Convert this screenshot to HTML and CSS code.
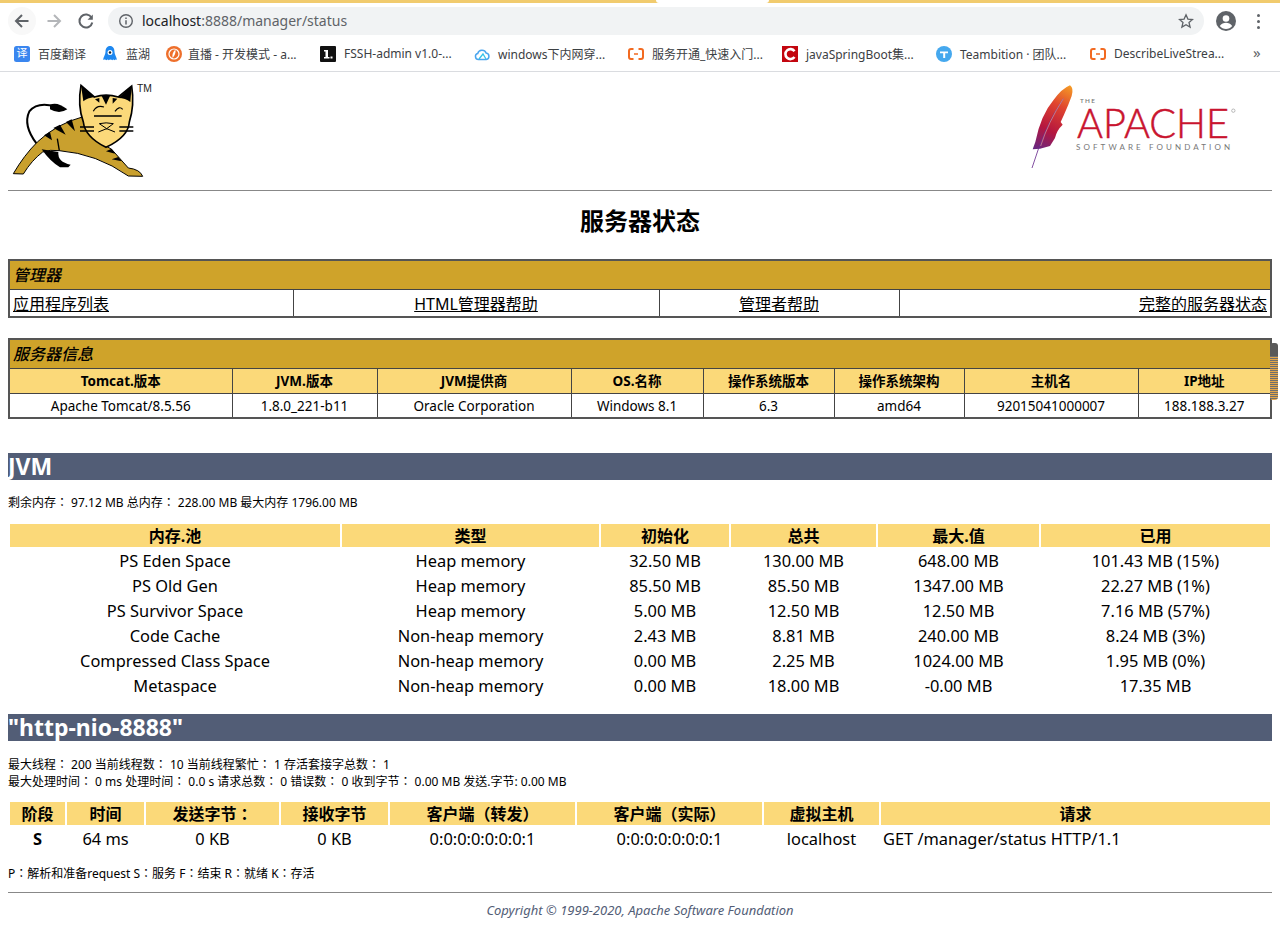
FILE: index.html
```html
<!DOCTYPE html>
<html lang="zh">
<head>
<meta charset="utf-8">
<title>/manager</title>
<link rel="stylesheet" href="styles.css">
</head>
<body>
<header class="browser">
  <div class="tabstrip"><div class="tabgap"></div></div>
  <div class="toolbar">
    <span class="navbtn hover"><svg width="18" height="18" viewBox="0 0 18 18"><path d="M15.5 9H3.5M9 3L3 9l6 6" fill="none" stroke="#5f6368" stroke-width="2"/></svg></span>
    <span class="navbtn"><svg width="18" height="18" viewBox="0 0 18 18"><path d="M2.500 9H14.500M9 3l6 6-6 6" fill="none" stroke="#b4b6b9" stroke-width="2"/></svg></span>
    <span class="navbtn"><svg width="18" height="18" viewBox="0 0 18 18"><path d="M14.600 5.800A6.500 6.500 0 1 0 15.300 10.500" fill="none" stroke="#5f6368" stroke-width="2"/><path d="M15.800 2.500V7.800H10.500Z" fill="#5f6368"/></svg></span>
    <div class="omnibox">
      <svg class="info" width="16" height="16" viewBox="0 0 16 16"><circle cx="8" cy="8" r="6.300" fill="none" stroke="#5f6368" stroke-width="1.400"/><path d="M8 7.200v4.300M8 4.500v1.500" stroke="#5f6368" stroke-width="1.500"/></svg>
      <span class="url"><span class="host">localhost</span>:8888/manager/status</span>
      <svg class="star" width="16" height="16" viewBox="0 0 16 16"><path d="M8 1.800l1.900 4.300 4.600.4-3.500 3 1.100 4.600L8 11.700l-4.100 2.400L5 9.500l-3.500-3 4.600-.4z" fill="none" stroke="#5f6368" stroke-width="1.300"/></svg>
    </div>
    <svg class="avatar" width="20" height="20" viewBox="0 0 20 20"><circle cx="10" cy="10" r="10" fill="#5f6368"/><circle cx="10" cy="7.500" r="3.300" fill="#fff"/><path d="M3.800 15c1.500-2.500 4-3.300 6.200-3.300s4.700.8 6.200 3.300c-1.500 1.900-3.700 3-6.200 3s-4.700-1.100-6.200-3z" fill="#fff"/></svg>
    <span class="dots"><i></i><i></i><i></i></span>
  </div>
  <nav class="bookmarks">
    <a class="bm bm-a"><svg width="16" height="16" viewBox="0 0 16 16"><rect width="16" height="16" rx="2.500" fill="#3a86ef"/></svg><span class="ficon">译</span><span>百度翻译</span></a>
    <a class="bm bm-b"><svg width="14" height="16" viewBox="0 0 14 16"><path d="M7 0c3 0 4.500 2.500 4.500 6 0 2 2 5 2.500 8-1.200-.6-1.700-.6-2.500.2-.8-.8-1.500-.8-2.200 0-.8-.8-2.800-.8-3.600 0-.7-.8-1.400-.8-2.200 0C2.700 13.400 1.200 13.400 0 14c.5-3 2.500-6 2.500-8C2.500 2.500 4 0 7 0z" fill="#1e88f0"/><circle cx="7" cy="6.500" r="2.500" fill="#fff"/><circle cx="7" cy="6.500" r="1.200" fill="#123"/></svg><span>蓝湖</span></a>
    <a class="bm bm-c"><svg width="16" height="16" viewBox="0 0 16 16"><circle cx="8" cy="8" r="8" fill="#ee6f2b"/><circle cx="8" cy="8" r="5" fill="none" stroke="#fff" stroke-width="1.200"/><path d="M9.500 3.500C7 6 6 8 6.500 12 8.500 10 10 7 9.500 3.500z" fill="#fff"/></svg><span>直播 - 开发模式 - a...</span></a>
    <a class="bm"><svg width="16" height="16" viewBox="0 0 16 16"><rect width="16" height="16" rx="1" fill="#111"/><path d="M4 4h4v7h1.500v1.500H4V11h1.500V5.500H4zM10.500 10.500H12.500V12.500H10.500z" fill="#fff"/></svg><span>FSSH-admin v1.0-...</span></a>
    <a class="bm"><svg width="16" height="16" viewBox="0 0 16 16"><path d="M4.500 13.500a3 3 0 0 1-.8-5.900 4.400 4.400 0 0 1 8.400-.6 3.300 3.300 0 0 1 .2 6.500z" fill="none" stroke="#4aa5ee" stroke-width="1.500"/><path d="M5 13l4-5 3 5" fill="none" stroke="#35c4e8" stroke-width="1.300"/></svg><span>windows下内网穿...</span></a>
    <a class="bm"><svg width="16" height="16" viewBox="0 0 16 16"><path d="M5.500 3H3a2 2 0 0 0-2 2v6a2 2 0 0 0 2 2h2.500M10.500 3H13a2 2 0 0 1 2 2v6a2 2 0 0 1-2 2h-2.500" fill="none" stroke="#f26a21" stroke-width="2"/><path d="M6 8h4" stroke="#f26a21" stroke-width="1.500"/></svg><span>服务开通_快速入门...</span></a>
    <a class="bm"><svg width="16" height="16" viewBox="0 0 16 16"><rect width="16" height="16" fill="#c3060f"/><path d="M12.500 5.200A5 5 0 1 0 12.500 11" fill="none" stroke="#fff" stroke-width="2.600"/></svg><span>javaSpringBoot集...</span></a>
    <a class="bm"><svg width="16" height="16" viewBox="0 0 16 16"><circle cx="8" cy="8" r="8" fill="#45a8ee"/><path d="M4 5.500h8v1.800H9.200V12H7.200V7.300H4z" fill="#fff"/></svg><span>Teambition · 团队...</span></a>
    <a class="bm"><svg width="16" height="16" viewBox="0 0 16 16"><path d="M5.500 3H3a2 2 0 0 0-2 2v6a2 2 0 0 0 2 2h2.500M10.500 3H13a2 2 0 0 1 2 2v6a2 2 0 0 1-2 2h-2.500" fill="none" stroke="#f26a21" stroke-width="2"/><path d="M6 8h4" stroke="#f26a21" stroke-width="1.500"/></svg><span>DescribeLiveStrea...</span></a>
    <span class="more">»</span>
  </nav>
</header>

<main class="page">
  <div class="brand">
    <svg class="tomcat" width="150" height="102" viewBox="24 24 450 306" aria-label="Tomcat">
      <path d="M110 215Q68 160 88 118Q112 88 165 103" fill="none" stroke="#000" stroke-width="6"/>
      <path d="M150 98Q172 88 202 112Q178 128 150 112Z" fill="#000"/>
      <path d="M250 134Q170 155 112 210Q72 250 40 305L70 306Q95 265 128 240Q150 232 178 236Q290 245 385 312L428 313Q420 292 385 288L335 232Q300 215 262 180Z" fill="#c9a02e" stroke="#000" stroke-width="3"/>
      <path d="M125 232L175 240Q172 270 212 278L205 286H180Q150 268 125 232Z" fill="#000"/>
      <path d="M172 200L178 236" stroke="#000" stroke-width="4"/>
      <path d="M215 142L225 178L198 150ZM180 158L197 188L160 168ZM150 180L156 205L132 190ZM335 230L345 245L318 238ZM355 255L365 268L335 262Z" fill="#000"/>
      <path d="M243 40L283 75Q318 64 355 75L395 42Q404 100 388 150Q385 195 318 226Q255 195 250 150Q232 100 243 40Z" fill="#fbd97a" stroke="#000" stroke-width="5"/>
      <path d="M243 40L283 75Q262 78 250 88ZM395 42L355 78Q376 78 391 90Z" fill="#000"/>
      <path d="M305 72L318 98L330 72ZM338 78L338 95L352 80ZM298 78L298 92L285 82Z" fill="#000"/>
      <path d="M282 132H365M240 165H282M240 177H282M358 165H400M358 177H400" stroke="#000" stroke-width="4"/>
      <path d="M280 118Q290 98 312 105M345 118Q358 100 368 112" fill="none" stroke="#000" stroke-width="3.500"/>
      <path d="M298 155Q318 150 340 155L320 170ZM295 180L320 170L345 180M320 170V172" fill="none" stroke="#000" stroke-width="3"/>
      <text x="411" y="59" class="tm">TM</text>
    </svg>
    <svg class="apache" width="252" height="102" viewBox="0 24 756 306" aria-label="The Apache Software Foundation">
      <defs>
        <linearGradient id="feather" x1="150" y1="40" x2="40" y2="240" gradientUnits="userSpaceOnUse">
          <stop offset="0" stop-color="#f59c25"/>
          <stop offset=".3" stop-color="#e0452f"/>
          <stop offset=".65" stop-color="#b5163f"/>
          <stop offset="1" stop-color="#5c2a8c"/>
        </linearGradient>
      </defs>
      <path d="M150 40Q162 48 155 72Q145 100 132 128L122 150L128 158Q110 175 105 198L90 222L60 230L38 232L46 210Q62 130 100 85Q125 50 150 40Z" fill="url(#feather)"/>
      <path d="M36 288Q75 160 130 80" fill="none" stroke="#6a2d8f" stroke-width="2.500"/>
      <path d="M130 80Q85 150 62 222" fill="none" stroke="#f6c7a8" stroke-width="1.500"/>
      <text x="180" y="94" class="ap-the">THE</text>
      <text x="171" y="197" class="ap-name" textLength="456" lengthAdjust="spacingAndGlyphs">APACHE</text>
      <text x="168" y="234" class="ap-sub" textLength="462">SOFTWARE FOUNDATION</text>
      <circle cx="640" cy="116" r="5" fill="none" stroke="#999" stroke-width="2"/>
    </svg>
  </div>
  <hr class="rule">
  <h1 class="title">服务器状态</h1>

  <table class="grid links">
    <colgroup><col class="l1"><col class="l2"><col class="l3"><col class="l4"></colgroup>
    <tr><td colspan="4" class="section">管理器</td></tr>
    <tr class="linkrow">
      <td class="left"><a href="#">应用程序列表</a></td>
      <td class="center"><a href="#">HTML管理器帮助</a></td>
      <td class="center"><a href="#">管理者帮助</a></td>
      <td class="right"><a href="#">完整的服务器状态</a></td>
    </tr>
  </table>

  <table class="grid server">
    <colgroup><col class="s1"><col class="s2"><col class="s3"><col class="s4"><col class="s5"><col class="s6"><col class="s7"><col class="s8"></colgroup>
    <tr><td colspan="8" class="section">服务器信息</td></tr>
    <tr class="heads"><th>Tomcat.版本</th><th>JVM.版本</th><th>JVM提供商</th><th>OS.名称</th><th>操作系统版本</th><th>操作系统架构</th><th>主机名</th><th>IP地址</th></tr>
    <tr class="vals"><td>Apache Tomcat/8.5.56</td><td>1.8.0_221-b11</td><td>Oracle Corporation</td><td>Windows 8.1</td><td>6.3</td><td>amd64</td><td>92015041000007</td><td>188.188.3.27</td></tr>
  </table>

  <h2 class="bar bar-jvm">JVM</h2>
  <p class="note note-mem" lang="zh-Hant">剩余内存： 97.12 MB 总内存： 228.00 MB 最大内存 1796.00 MB</p>
  <table class="plain mem">
    <colgroup><col class="m1"><col class="m2"><col class="m3"><col class="m4"><col class="m5"><col class="m6"></colgroup>
    <tr><th>内存.池</th><th>类型</th><th>初始化</th><th>总共</th><th>最大.值</th><th>已用</th></tr>
    <tr><td>PS Eden Space</td><td>Heap memory</td><td>32.50 MB</td><td>130.00 MB</td><td>648.00 MB</td><td>101.43 MB (15%)</td></tr>
    <tr><td>PS Old Gen</td><td>Heap memory</td><td>85.50 MB</td><td>85.50 MB</td><td>1347.00 MB</td><td>22.27 MB (1%)</td></tr>
    <tr><td>PS Survivor Space</td><td>Heap memory</td><td>5.00 MB</td><td>12.50 MB</td><td>12.50 MB</td><td>7.16 MB (57%)</td></tr>
    <tr><td>Code Cache</td><td>Non-heap memory</td><td>2.43 MB</td><td>8.81 MB</td><td>240.00 MB</td><td>8.24 MB (3%)</td></tr>
    <tr><td>Compressed Class Space</td><td>Non-heap memory</td><td>0.00 MB</td><td>2.25 MB</td><td>1024.00 MB</td><td>1.95 MB (0%)</td></tr>
    <tr><td>Metaspace</td><td>Non-heap memory</td><td>0.00 MB</td><td>18.00 MB</td><td>-0.00 MB</td><td>17.35 MB</td></tr>
  </table>

  <h2 class="bar bar-http">"http-nio-8888"</h2>
  <p class="note note-thread" lang="zh-Hant">最大线程： 200 当前线程数： 10 当前线程繁忙： 1 存活套接字总数： 1<br>最大处理时间： 0 ms 处理时间： 0.0 s 请求总数： 0 错误数： 0 收到字节： 0.00 MB 发送.字节: 0.00 MB</p>
  <table class="plain req" lang="zh-Hant">
    <colgroup><col class="r1"><col class="r2"><col class="r3"><col class="r4"><col class="r5"><col class="r6"><col class="r7"><col class="r8"></colgroup>
    <tr><th>阶段</th><th>时间</th><th>发送字节：</th><th>接收字节</th><th>客户端（转发）</th><th>客户端（实际）</th><th>虚拟主机</th><th>请求</th></tr>
    <tr><td class="stage">S</td><td>64 ms</td><td>0 KB</td><td>0 KB</td><td>0:0:0:0:0:0:0:1</td><td>0:0:0:0:0:0:0:1</td><td>localhost</td><td class="left">GET /manager/status HTTP/1.1</td></tr>
  </table>
  <p class="note note-legend" lang="zh-Hant">P：解析和准备request S：服务 F：结束 R：就绪 K：存活</p>
  <hr class="rule rule-foot">
  <p class="copyright">Copyright © 1999-2020, Apache Software Foundation</p>
</main>
<div class="thumb"></div>
</body>
</html>
```
FILE: styles.css
```css
* { box-sizing: border-box; }
html, body { margin: 0; height: 931px; overflow: hidden; background: #fff; }
body { font-family: "Noto Sans", "Noto Sans CJK SC", sans-serif; color: #000; position: relative; }

.browser { height: 72px; border-bottom: 1px solid #dadce0; background: #fff; }
.tabstrip { height: 3px; background: #f1cb6e; padding-left: 656px; }
.tabgap { width: 113px; height: 3px; background: #fff; border-radius: 0 0 4px 4px; }
.toolbar { height: 32px; padding: 4px 0 0 8px; display: flex; align-items: center; }
.navbtn { width: 28px; height: 28px; border-radius: 50%; display: flex; align-items: center; justify-content: center; margin-right: 4px; flex: none; }
.navbtn.hover { background: #f8f8f8; }
.omnibox { flex: none; width: 1096px; height: 28px; margin-left: 4px; border-radius: 14px; background: #f1f3f4; display: flex; align-items: center; padding: 0 10px; font: 14px/18px "Noto Sans", sans-serif; color: #5f6368; }
.omnibox .info { margin-right: 8px; }
.url { flex: 1; margin-top: -1px; }
.host { color: #202124; }
.avatar { margin-left: 12px; flex: none; }
.dots { margin-left: 21px; display: flex; flex-direction: column; gap: 3px; }
.dots i { width: 3px; height: 3px; border-radius: 50%; background: #5f6368; display: block; }

.bookmarks { height: 36px; padding: 1px 0 0 14px; display: flex; align-items: center; font: 12px "Noto Sans", "Noto Sans CJK SC", sans-serif; color: #3c4043; position: relative; }
.bm { width: 154px; flex: none; display: flex; align-items: center; gap: 8px; position: relative; white-space: nowrap; }
.bm-a { width: 89px; }
.bm-b { width: 63px; gap: 9px; }
.bm-c { width: 154px; gap: 6px; }
.ficon { position: absolute; left: 2px; top: 1px; width: 12px; color: #fff; font-size: 11px; line-height: 14px; text-align: center; }
.more { position: absolute; left: 1253px; top: 7px; font-size: 15px; color: #5f6368; }

.page { padding: 8px 8px 0; }
.brand { height: 102px; display: flex; justify-content: space-between; }
.tm { font: 31px "Liberation Sans", sans-serif; fill: #222; }
.ap-the { font: 600 19px "Lato", sans-serif; letter-spacing: 4px; fill: #777; }
.ap-name { font: 300 122px "Lato", sans-serif; fill: #c9142f; stroke: #c9142f; stroke-width: 1.500px; }
.ap-sub { font: 400 24px "Lato", sans-serif; fill: #777; }

.rule { height: 1px; margin: 8px 0 0; border: 0; background: #888; }
.title { margin: 17px 0 0; height: 26px; line-height: 26px; text-align: center; font-size: 24px; font-weight: 700; }

table { table-layout: fixed; width: 1264px; }
.grid { border-collapse: collapse; border: 2px solid #555; font-size: 14px; }
.grid td, .grid th { border: 1px solid #444; padding: 0 3px; }
.links { margin-top: 25px; font-size: 16px; }
.server { margin-top: 20px; }
.section { height: 29px; background: #cfa32a; font-style: italic; font-weight: 500; font-size: 16px; text-align: left; padding: 0 3px 2px !important; color: #000; }
.linkrow { height: 28px; }
.linkrow a { color: #000; text-decoration: underline; }
.left { text-align: left; }
.center { text-align: center; }
.right { text-align: right; }
.l1 { width: 284px; } .l2 { width: 366px; } .l3 { width: 240px; } .l4 { width: 372px; }
.s1 { width: 223px; } .s2 { width: 145px; } .s3 { width: 194px; } .s4 { width: 132px; } .s5 { width: 131px; } .s6 { width: 130px; } .s7 { width: 174px; } .s8 { width: 133px; }
.heads { height: 25px; }
.heads th { background: #fbd979; font-size: 13.5px; font-weight: 700; padding-bottom: 1px; }
.vals { height: 25px; text-align: center; font-size: 13.5px; }
.vals td { padding-top: 1px; }

.bar { height: 27px; margin: 0; background: #525d76; color: #fff; font-size: 23px; line-height: 27px; font-weight: 700; }
.bar-jvm { margin-top: 34px; }
.bar-http { margin-top: 15px; }
.note { margin: 0; font-family: "Noto Sans", "Noto Sans CJK TC", sans-serif; font-size: 12px; line-height: 17px; }
.note-mem { margin-top: 14px; }
.note-thread { margin-top: 15px; }
.note-legend { margin-top: 13px; }

.plain { border-collapse: separate; border-spacing: 2px; font-size: 16.400px; }
.plain th, .plain td { padding: 1px 2px 0; text-align: center; overflow: hidden; white-space: nowrap; }
.plain th { height: 23px; background: #fbd979; font-weight: 700; line-height: 22px; font-size: 16px; }
.plain td { height: 23px; line-height: 22px; }
.plain td.left { text-align: left; }
.mem { margin-top: 11px; }
.req { margin-top: 10px; font-family: "Noto Sans", "Noto Sans CJK TC", sans-serif; }
.stage { font-weight: 700; }
.m1 { width: 330px; } .m2 { width: 257px; } .m3 { width: 128px; } .m4 { width: 145px; } .m5 { width: 161px; } .m6 { width: 229px; }
.r1 { width: 55px; } .r2 { width: 77px; } .r3 { width: 133px; } .r4 { width: 107px; } .r5 { width: 185px; } .r6 { width: 185px; } .r7 { width: 115px; } .r8 { width: 389px; }

.rule-foot { margin-top: 10px; }
.copyright { margin: 8px 0 0; text-align: center; font-size: 13px; font-style: italic; color: #525d76; }

.thumb { position: absolute; left: 1270px; top: 343px; width: 8px; height: 57px; border-radius: 3px; background: linear-gradient(#5a5a5a, #5a5a5a) top / 100% 13px no-repeat, repeating-linear-gradient(to bottom, #e4a64a 0, #e4a64a 1px, #6f6f6f 1px, #6f6f6f 2px); }
```
